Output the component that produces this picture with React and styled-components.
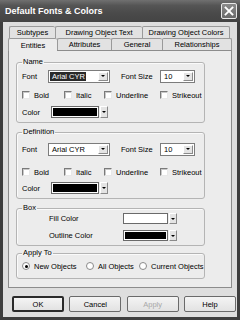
import React from "react";
import styled, { createGlobalStyle } from "styled-components";

const GlobalStyle = createGlobalStyle`
  html, body { margin: 0; padding: 0; width: 240px; height: 320px; overflow: hidden; background: #fff; }
  body { font-family: "Liberation Sans", Arial, sans-serif; font-size: 7.5px; color: #000; }
  * { box-sizing: border-box; }
`;

const Window = styled.div`
  width: 240px;
  height: 320px;
  display: flex;
  flex-direction: column;
`;

const TitleBar = styled.div`
  height: 22px;
  flex: none;
  display: flex;
  align-items: center;
  justify-content: space-between;
  padding: 0 3px 0 5px;
  background: linear-gradient(#707070 0%, #555 25%, #4a4a4a 60%, #444 100%);
`;

const TitleText = styled.span`
  color: #fff;
  font-weight: bold;
  font-size: 9px;
  letter-spacing: 0;
`;

const CloseButton = styled.div`
  width: 16px;
  height: 16px;
  border: 1px solid #e8e8e8;
  border-radius: 2px;
  background: linear-gradient(#8a8a8a, #6a6a6a);
  display: flex;
  align-items: center;
  justify-content: center;
`;

const Body = styled.div`
  flex: 1;
  display: flex;
  flex-direction: column;
  background: #dedede;
  border-left: 3px solid #3e3e3e;
  border-right: 3px solid #3e3e3e;
  border-bottom: 3px solid #3e3e3e;
  padding-top: 4px;
`;

const TabRow = styled.div`
  display: flex;
  height: 12px;
  margin-left: ${(p) => p.$ml}px;
  position: relative;
  z-index: ${(p) => p.$z};
`;

const Tab = styled.div`
  width: ${(p) => p.$w}px;
  height: ${(p) => (p.$active ? 13 : 12)}px;
  display: flex;
  align-items: center;
  justify-content: center;
  border-top: 1px solid #9a9a9a;
  border-left: 1px solid #9a9a9a;
  border-right: ${(p) => (p.$last ? "1px solid #9a9a9a" : "none")};
  border-radius: 2px 2px 0 0;
  background: ${(p) => (p.$active ? "#ececec" : "#e2e2e2")};
  white-space: nowrap;
`;

const Panel = styled.div`
  margin: 0 5px;
  height: 238px;
  flex: none;
  border: 1px solid #8c8c8c;
  background: #ececec;
  padding: 0 0 0 7px;
  display: flex;
  flex-direction: column;
`;

const Group = styled.fieldset`
  width: 189px;
  margin: ${(p) => p.$mt}px 0 0 0;
  padding: 0 4px ${(p) => p.$pb}px 5px;
  border: 1px solid #b4b4b4;
  border-radius: 3px;
  box-shadow: inset 1px 1px 0 #fafafa;
  min-width: 0;
`;

const Legend = styled.legend`
  padding: 0 1px;
  line-height: 10px;
  height: 10px;
`;

const Row = styled.div`
  display: flex;
  align-items: center;
  height: ${(p) => p.$h}px;
  margin-top: ${(p) => p.$mt}px;
  padding-left: ${(p) => p.$pl || 0}px;
  white-space: nowrap;
`;

const Label = styled.span`
  width: ${(p) => p.$w}px;
  margin-left: ${(p) => p.$ml || 0}px;
  flex: none;
`;

const Combo = styled.div`
  width: ${(p) => p.$w}px;
  height: 13px;
  flex: none;
  border: 1px solid #7c7c7c;
  background: #fff;
  display: flex;
  align-items: center;
  padding: 1px;
`;

const ComboText = styled.span`
  flex: 1;
  display: flex;
  align-items: center;
  height: 100%;
`;

const Selected = styled.span`
  background: ${(p) => (p.$hl ? "#2a2a2a" : "transparent")};
  color: ${(p) => (p.$hl ? "#fff" : "#000")};
  padding: 0 1px 0 2px;
  line-height: 9px;
`;

const DropButton = styled.div`
  width: ${(p) => p.$w || 10}px;
  height: ${(p) => p.$h || 9}px;
  flex: none;
  background: #e4e4e4;
  border: 1px solid;
  border-color: #fff #8a8a8a #8a8a8a #fff;
  display: flex;
  align-items: center;
  justify-content: center;
  margin-left: ${(p) => p.$ml || 0}px;
`;

const Arrow = styled.span`
  width: 0;
  height: 0;
  border-left: ${(p) => p.$s}px solid transparent;
  border-right: ${(p) => p.$s}px solid transparent;
  border-top: ${(p) => p.$s}px solid #000;
`;

const Swatch = styled.div`
  width: ${(p) => p.$w}px;
  height: ${(p) => p.$h}px;
  flex: none;
  background: ${(p) => p.$color};
  border: 1px solid #6a6a6a;
  box-shadow: inset 0 0 0 1px #fff;
  padding: 1px;
`;

const SwatchFill = styled.div`
  width: 100%;
  height: 100%;
  background: ${(p) => p.$color};
`;

const OptionGrid = styled.div`
  display: grid;
  grid-template-columns: ${(p) => p.$cols};
  align-items: center;
  height: ${(p) => p.$h}px;
  margin-top: ${(p) => p.$mt}px;
`;

const Option = styled.div`
  display: flex;
  align-items: center;
  gap: 4px;
  white-space: nowrap;
`;

const Check = styled.span`
  width: 8px;
  height: 8px;
  flex: none;
  background: #fff;
  border: 1px solid;
  border-color: #7a7a7a #e8e8e8 #e8e8e8 #7a7a7a;
  box-shadow: inset 1px 1px 0 #c8c8c8;
`;

const Radio = styled.span`
  width: 8px;
  height: 8px;
  flex: none;
  border-radius: 50%;
  background: #fff;
  border: 1px solid #8a8a8a;
  display: flex;
  align-items: center;
  justify-content: center;
  &::after {
    content: "";
    width: 3px;
    height: 3px;
    border-radius: 50%;
    background: ${(p) => (p.$on ? "#000" : "transparent")};
  }
`;

const ButtonBar = styled.div`
  display: flex;
  justify-content: space-between;
  margin: 8px 1px 0 9px;
  height: 16px;
`;

const Button = styled.div`
  width: 52px;
  height: 16px;
  display: flex;
  align-items: center;
  justify-content: center;
  border: ${(p) => (p.$default ? "2px solid #2a2a2a" : "1px solid #6a6a6a")};
  border-radius: 2px;
  background: linear-gradient(#f4f4f4, #e2e2e2);
  color: ${(p) => (p.$disabled ? "#a8a8a8" : "#000")};
`;

const FontRow = ({ mt, hl }) => (
  <Row $h={14} $mt={mt}>
    <Label $w={26}>Font</Label>
    <Combo $w={62}>
      <ComboText>
        <Selected $hl={hl}>Arial CYR</Selected>
      </ComboText>
      <DropButton>
        <Arrow $s={2.5} />
      </DropButton>
    </Combo>
    <Label $w={39} $ml={11}>Font Size</Label>
    <Combo $w={35}>
      <ComboText>
        <Selected>10</Selected>
      </ComboText>
      <DropButton>
        <Arrow $s={2.5} />
      </DropButton>
    </Combo>
  </Row>
);

const StyleRow = ({ mt }) => (
  <OptionGrid $cols="42px 40px 56px auto" $h={12} $mt={mt}>
    {["Bold", "Italic", "Underline", "Strikeout"].map((t) => (
      <Option key={t}>
        <Check />
        {t}
      </Option>
    ))}
  </OptionGrid>
);

const ColorPicker = ({ w, h, color, pl, label, labelW, mt }) => (
  <Row $h={h} $mt={mt} $pl={pl}>
    <Label $w={labelW}>{label}</Label>
    <Swatch $w={w} $h={h} $color="#fff">
      <SwatchFill $color={color} />
    </Swatch>
    <DropButton $w={8} $h={h} $ml={1}>
      <Arrow $s={2} />
    </DropButton>
  </Row>
);

export default function App() {
  return (
    <Window>
      <GlobalStyle />
      <TitleBar>
        <TitleText>Default Fonts &amp; Colors</TitleText>
        <CloseButton>
          <svg width="10" height="10" viewBox="0 0 10 10">
            <path d="M1.5 1.5 L8.5 8.5 M8.5 1.5 L1.5 8.5" stroke="#fff" strokeWidth="1.8" strokeLinecap="square" />
          </svg>
        </CloseButton>
      </TitleBar>
      <Body>
        <TabRow $ml={6} $z={1}>
          <Tab $w={46}>Subtypes</Tab>
          <Tab $w={87}>Drawing Object Text</Tab>
          <Tab $w={88} $last>Drawing Object Colors</Tab>
        </TabRow>
        <TabRow $ml={5} $z={2}>
          <Tab $w={49} $active>Entities</Tab>
          <Tab $w={54}>Attributes</Tab>
          <Tab $w={51}>General</Tab>
          <Tab $w={70} $last>Relationships</Tab>
        </TabRow>
        <Panel>
          <Group $mt={6} $pb={4}>
            <Legend>Name</Legend>
            <FontRow mt={2} hl />
            <StyleRow mt={6} />
            <ColorPicker label="Color" labelW={29} w={48} h={12} color="#000" mt={5} />
          </Group>
          <Group $mt={4} $pb={4}>
            <Legend>Definition</Legend>
            <FontRow mt={5} />
            <StyleRow mt={10} />
            <ColorPicker label="Color" labelW={29} w={48} h={12} color="#000" mt={4} />
          </Group>
          <Group $mt={4} $pb={4}>
            <Legend>Box</Legend>
            <ColorPicker label="Fill Color" labelW={74} pl={27} w={45} h={11} color="#fff" mt={0} />
            <ColorPicker label="Outline Color" labelW={74} pl={27} w={45} h={11} color="#000" mt={6} />
          </Group>
          <Group $mt={2} $pb={7}>
            <Legend>Apply To</Legend>
            <OptionGrid $cols="64px 53px auto" $h={10} $mt={3}>
              <Option>
                <Radio $on />
                New Objects
              </Option>
              <Option>
                <Radio />
                All Objects
              </Option>
              <Option>
                <Radio />
                Current Objects
              </Option>
            </OptionGrid>
          </Group>
        </Panel>
        <ButtonBar>
          <Button $default>OK</Button>
          <Button>Cancel</Button>
          <Button $disabled>Apply</Button>
          <Button>Help</Button>
        </ButtonBar>
      </Body>
    </Window>
  );
}
